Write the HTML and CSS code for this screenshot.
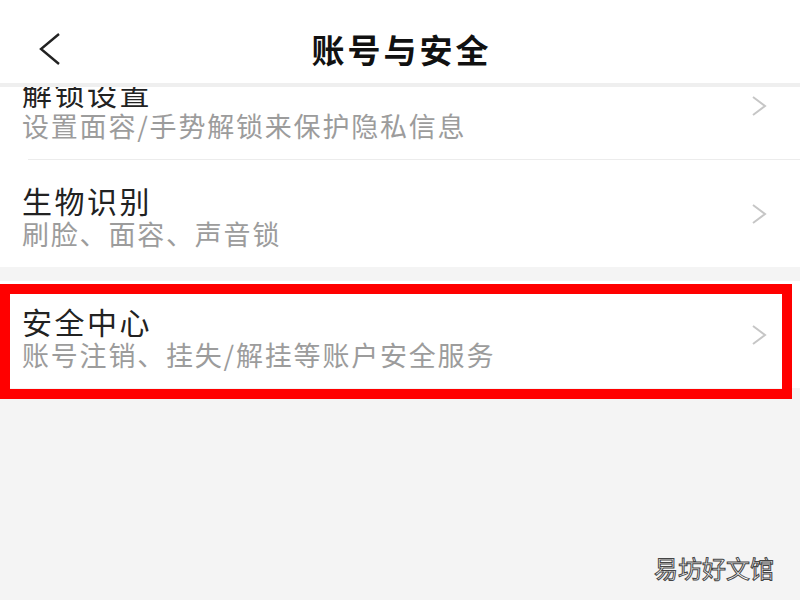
FILE: index.html
```html
<!DOCTYPE html>
<html lang="zh-CN">
<head>
<meta charset="utf-8">
<title>账号与安全</title>
<link rel="stylesheet" href="styles.css">
</head>
<body>
<div class="page">
  <header class="topbar">
    <div class="back">
      <svg width="22" height="32" viewBox="0 0 22 32"><polyline points="20,1 2,16 20,31" fill="none" stroke="#222" stroke-width="2.4" stroke-linejoin="miter"/></svg>
    </div>
    <h1 class="title">账号与安全</h1>
    <div></div>
  </header>
  <main class="content">
    <div class="list">
      <div class="row">
        <div class="text">
          <div class="row-title">解锁设置</div>
          <div class="row-sub">设置面容/手势解锁来保护隐私信息</div>
        </div>
        <svg class="chev" width="16" height="22" viewBox="0 0 16 22"><polyline points="2,2 14,11 2,20" fill="none" stroke="#c6c6c6" stroke-width="2"/></svg>
      </div>
      <div class="divider"></div>
      <div class="row">
        <div class="text">
          <div class="row-title">生物识别</div>
          <div class="row-sub">刷脸、面容、声音锁</div>
        </div>
        <svg class="chev" width="16" height="22" viewBox="0 0 16 22"><polyline points="2,2 14,11 2,20" fill="none" stroke="#c6c6c6" stroke-width="2"/></svg>
      </div>
      <div class="gap"></div>
      <div class="row highlight">
        <div class="text">
          <div class="row-title">安全中心</div>
          <div class="row-sub">账号注销、挂失/解挂等账户安全服务</div>
        </div>
        <svg class="chev" width="16" height="22" viewBox="0 0 16 22"><polyline points="2,2 14,11 2,20" fill="none" stroke="#c6c6c6" stroke-width="2"/></svg>
        <div class="redbox"></div>
      </div>
    </div>
  </main>
  <div class="watermark">易坊好文馆</div>
</div>
</body>
</html>
```

FILE: styles.css
```css
* { box-sizing: border-box; }
html, body { margin: 0; padding: 0; }
body {
  background: #f4f4f4;
  font-family: "Noto Sans CJK SC", "Noto Sans", sans-serif;
}
.page {
  position: relative;
  width: 800px;
  height: 600px;
  overflow: hidden;
  background: #f4f4f4;
  display: flex;
  flex-direction: column;
}
.topbar {
  position: relative;
  z-index: 2;
  height: 87px;
  flex: none;
  padding-top: 14px;
  background: #fff;
  border-bottom: 4px solid #efefef;
  display: grid;
  grid-template-columns: 1fr auto 1fr;
  align-items: center;
}
.back {
  padding-left: 39px;
  display: flex;
  align-items: center;
}
.back svg { display: block; }
.title {
  margin: 0;
  font-size: 33px;
  font-weight: 700;
  letter-spacing: 3px;
  color: #111;
  line-height: 40px;
  padding-left: 3px;
}
.content {
  flex: 1;
  overflow: hidden;
}
.list {
  margin-top: -35px;
}
.row {
  position: relative;
  height: 107px;
  background: #fff;
  display: flex;
  align-items: stretch;
  justify-content: space-between;
  padding: 0 33px 0 22px;
}
.text {
  padding-top: 23px;
}
.row-title {
  font-size: 30px;
  line-height: 34px;
  letter-spacing: 2.5px;
  color: #222;
}
.row-sub {
  font-size: 27px;
  line-height: 34px;
  letter-spacing: 1.8px;
  color: #9c9c9c;
}
.chev {
  align-self: center;
  display: block;
}
.divider {
  height: 1px;
  border-left: 28px solid #fff;
  background-clip: content-box;
  background-color: #ececec;
}
.gap {
  height: 14px;
}
.redbox {
  position: absolute;
  left: 0;
  top: 3px;
  width: 792px;
  height: 115px;
  border: 10px solid #ff0000;
}
.watermark {
  position: absolute;
  left: 654px;
  top: 552px;
  font-size: 24px;
  line-height: 32px;
  color: #fff;
  -webkit-text-stroke: 1px #444;
}
```
